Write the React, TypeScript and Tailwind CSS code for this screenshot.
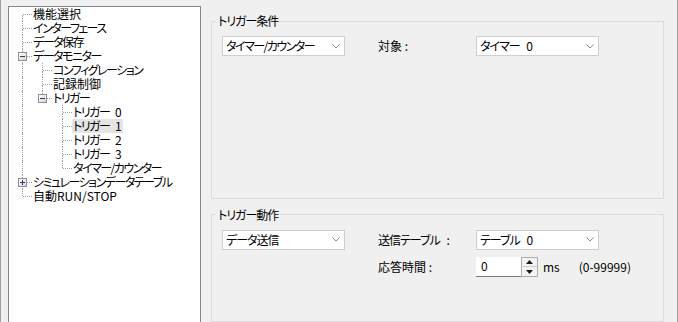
import React from "react";

type TreeItem = {
  label: string;
  ancestors: boolean[];
  last?: boolean;
  first?: boolean;
  expand?: "minus" | "plus";
  selected?: boolean;
  kanji?: boolean;
};

const SP = "\u2002\u00a0";

const items: TreeItem[] = [
  { label: "機能選択", ancestors: [], first: true, kanji: true },
  { label: "インターフェース", ancestors: [] },
  { label: "データ保存", ancestors: [] },
  { label: "データモニター", ancestors: [], expand: "minus" },
  { label: "コンフィグレーション", ancestors: [true] },
  { label: "記録制御", ancestors: [true], kanji: true },
  { label: "トリガー", ancestors: [true], expand: "minus", last: true },
  { label: `トリガー${SP}0`, ancestors: [true, false] },
  { label: `トリガー${SP}1`, ancestors: [true, false], selected: true },
  { label: `トリガー${SP}2`, ancestors: [true, false] },
  { label: `トリガー${SP}3`, ancestors: [true, false] },
  { label: "タイマー/カウンター", ancestors: [true, false], last: true },
  { label: "シミュレーションデータテーブル", ancestors: [], expand: "plus" },
  { label: "自動RUN/STOP", ancestors: [], last: true, kanji: true },
];

function TreeRow({ item }: { item: TreeItem }) {
  const base = item.kanji ? "tracking-normal" : "tracking-[-1.5px]";
  return (
    <div className="flex h-[14px]">
      {item.ancestors.map((a, i) => (
        <div key={i} className="w-[20px] h-full shrink-0">
          {a && <div className="ml-[10px] h-full border-l border-dotted border-[#a0a0a0]" />}
        </div>
      ))}
      <div className="relative w-[20px] h-full shrink-0 flex flex-col">
        <div
          className={
            item.first
              ? "ml-[10px] h-[7px]"
              : "ml-[10px] h-[7px] border-l border-dotted border-[#a0a0a0]"
          }
        />
        <div className="ml-[11px] w-[9px] h-[1px] border-t border-dotted border-[#a0a0a0]" />
        <div
          className={
            item.last
              ? "ml-[10px] h-[6px]"
              : "ml-[10px] h-[6px] border-l border-dotted border-[#a0a0a0]"
          }
        />
        {item.expand && (
          <div className="absolute left-[6px] top-[3px] w-[9px] h-[9px] border border-[#919191] bg-linear-to-br from-white to-[#d4d4d4] flex items-center justify-center">
            <div className="relative w-[5px] h-[5px] flex items-center justify-center">
              <div className="w-[5px] h-[1px] bg-[#24417c]" />
              {item.expand === "plus" && (
                <div className="absolute left-[2px] top-0 w-[1px] h-[5px] bg-[#24417c]" />
              )}
            </div>
          </div>
        )}
      </div>
      <span
        className={
          item.selected
            ? `pl-[1px] pr-[3px] whitespace-nowrap bg-[#e5e5e5] ${base}`
            : `pl-[1px] pr-[3px] whitespace-nowrap ${base}`
        }
      >
        {item.label}
      </span>
    </div>
  );
}

function Chevron() {
  return (
    <svg width="8" height="5" viewBox="0 0 8 5" className="shrink-0">
      <polyline points="0.5,0.5 4,4 7.5,0.5" fill="none" stroke="#8a8a8a" strokeWidth="1" />
    </svg>
  );
}

function Combo({ text, track }: { text: string; track: string }) {
  return (
    <div className="w-[123px] h-[20px] shrink-0 bg-white border border-[#cfcfcf] flex items-center pl-[3px] pr-[4px]">
      <span className={`flex-1 whitespace-nowrap ${track}`}>{text}</span>
      <Chevron />
    </div>
  );
}

function Spin() {
  return (
    <div className="flex h-[20px] items-stretch">
      <div className="w-[45px] bg-white border-b border-[#7a7a7a] pl-[5px] flex items-center">0</div>
      <div className="w-[17px] border border-[#acacac] bg-[#f4f4f4] flex flex-col">
        <div className="flex-1 flex items-center justify-center border-b border-[#cfcfcf]">
          <svg width="7" height="4" viewBox="0 0 7 4">
            <polygon points="3.5,0 7,4 0,4" fill="#1a1a1a" />
          </svg>
        </div>
        <div className="flex-1 flex items-center justify-center">
          <svg width="7" height="4" viewBox="0 0 7 4">
            <polygon points="0,0 7,0 3.5,4" fill="#1a1a1a" />
          </svg>
        </div>
      </div>
    </div>
  );
}

export default function App() {
  return (
    <div className="w-[678px] h-[322px] overflow-hidden bg-[#f0f0f0] border-l border-r border-[#a0a0a0] flex text-[12px] leading-[14px] text-black font-['Noto_Sans_CJK_JP','Noto_Sans',sans-serif] [font-feature-settings:'palt']">
      <div className="ml-[7px] mt-[6px] w-[193px] h-[340px] shrink-0 bg-white border border-[#828790] pl-[3px]">
        {items.map((it, i) => (
          <TreeRow key={i} item={it} />
        ))}
      </div>
      <div className="ml-[10px] w-[453px] shrink-0 flex flex-col mt-[14px]">
        <fieldset className="border border-[#dcdcdc] h-[195px] min-w-0 pl-[10px] pt-[8px] pr-0 pb-0 m-0">
          <legend className="ml-[-6px] px-[2px] leading-[14px] tracking-[-1px]">トリガー条件</legend>
          <div className="flex items-center h-[20px]">
            <Combo text="タイマー/カウンター" track="tracking-[-1.5px]" />
            <span className="ml-[33px] w-[98px] shrink-0">対象 :</span>
            <Combo text={`タイマー${SP}0`} track="tracking-[-1px]" />
          </div>
        </fieldset>
        <fieldset className="mt-[9px] border border-[#dcdcdc] h-[120px] min-w-0 pl-[10px] pt-[8px] pr-0 pb-0 m-0">
          <legend className="ml-[-6px] px-[2px] leading-[14px] tracking-[-1px]">トリガー動作</legend>
          <div className="flex items-center h-[20px]">
            <Combo text="データ送信" track="tracking-[-1px]" />
            <span className="ml-[33px] w-[98px] shrink-0 tracking-[-1px]">{`送信テーブル${SP}:`}</span>
            <Combo text={`テーブル${SP}0`} track="tracking-[-1px]" />
          </div>
          <div className="flex items-center h-[20px] mt-[7px]">
            <div className="w-[123px] shrink-0" />
            <span className="ml-[33px] w-[98px] shrink-0">応答時間 :</span>
            <Spin />
            <span className="ml-[5px]">ms</span>
            <span className="ml-[19px]">(0-99999)</span>
          </div>
        </fieldset>
      </div>
    </div>
  );
}
